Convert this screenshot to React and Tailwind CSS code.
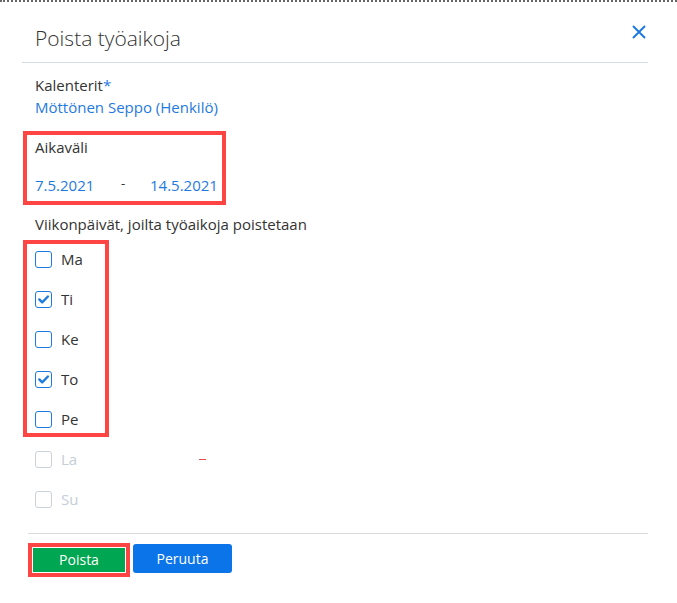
import React from 'react';

const days = [
  { label: 'Ma', checked: false },
  { label: 'Ti', checked: true },
  { label: 'Ke', checked: false },
  { label: 'To', checked: true },
  { label: 'Pe', checked: false },
];

function Box({ checked, disabled }) {
  return (
    <span
      className={
        'flex h-[17px] w-[17px] shrink-0 items-center justify-center rounded-[3px] border bg-white ' +
        (disabled ? 'border-[#c9d1da]' : 'border-[#1f7ae0]')
      }
    >
      {checked && (
        <svg width="13" height="13" viewBox="0 0 13 13" fill="none">
          <path d="M2.3 6.4 L5.2 9.3 L10.9 3.5" stroke="#1f7ae0" strokeWidth="2.4" strokeLinecap="round" strokeLinejoin="round" />
        </svg>
      )}
    </span>
  );
}

function DayRow({ label, checked, disabled, children, className = '' }) {
  return (
    <div className={'flex h-[22px] items-center gap-[9px] pl-[12px] ' + className}>
      <Box checked={checked} disabled={disabled} />
      <span className={'w-[18px] ' + (disabled ? 'text-[#c5cdd6]' : 'text-[#333]')}>{label}</span>
      {children}
    </div>
  );
}

export default function App() {
  return (
    <div
      className="h-[603px] w-full border-t-2 border-dotted border-[#666] bg-white text-[15px] leading-[22px] text-[#333]"
      style={{ fontFamily: '"Open Sans", "Noto Sans", sans-serif' }}
    >
      {/* header */}
      <div className="ml-[22px] flex h-[61px] w-[626px] justify-between border-b border-[#d3dbe3]">
        <h1 className="pl-[13px] pt-[21px] text-[21px] leading-[30px] font-light text-[#333]">Poista työaikoja</h1>
        <button className="mr-[1px] mt-[22px] h-[16px] w-[16px]">
          <svg width="16" height="16" viewBox="0 0 16 16" fill="none">
            <path d="M2 2 L14 14 M14 2 L2 14" stroke="#1f7ae0" strokeWidth="2" />
          </svg>
        </button>
      </div>

      <div className="ml-[22px] w-[626px]">
        <div className="pl-[13px] pt-[11px]">
          <div>
            Kalenterit<span className="text-[#1f7ae0]">*</span>
          </div>
          <div className="text-[#1f7ae0]">Möttönen Seppo (Henkilö)</div>
        </div>

        {/* date range */}
        <div className="ml-[1px] mt-[13px] w-[203px] border-4 border-[#ff4444] pb-[5px] pl-[8px] pt-[1px]">
          <div>Aikaväli</div>
          <div className="mt-[16px] flex text-[#1f7ae0]">
            <span className="w-[86px]">7.5.2021</span>
            <span className="w-[29px] -translate-y-[2px] text-[13px] text-[#333]">-</span>
            <span>14.5.2021</span>
          </div>
        </div>

        <div className="mt-[8px] pl-[13px]">Viikonpäivät, joilta työaikoja poistetaan</div>

        {/* weekdays */}
        <div className="ml-[1px] mt-[5px] flex w-[86px] flex-col gap-[18px] border-4 border-[#ff4444] pb-[3px] pt-[4px] [&>div]:pl-[8px]">
          {days.map((d) => (
            <DayRow key={d.label} label={d.label} checked={d.checked} />
          ))}
        </div>

        <DayRow label="La" disabled className="mt-[11px] !pl-[13px]">
          <span className="ml-[111px] h-[1px] w-[7px] bg-[#e84a4a]" />
        </DayRow>
        <DayRow label="Su" disabled className="mt-[18px] !pl-[13px]" />
      </div>

      {/* footer */}
      <div className="ml-[28px] mt-[23px] w-[620px] border-t border-[#d9d9d9] pt-[9px] text-[14px]">
        <div className="flex items-start gap-[3px]">
          <div className="h-[34px] w-[102px] border-4 border-[#ff4444] p-[1px]">
            <button className="flex h-[24px] w-[92px] items-center justify-center bg-[#00a651] text-white">Poista</button>
          </div>
          <button className="mt-[1px] flex h-[29px] w-[99px] items-center justify-center rounded-[3px] bg-[#0b74e8] text-white">
            Peruuta
          </button>
        </div>
      </div>
    </div>
  );
}
